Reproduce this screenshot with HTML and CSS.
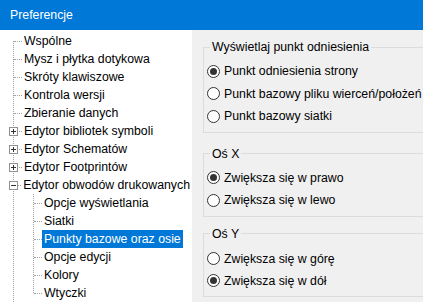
FILE: index.html
```html
<!DOCTYPE html>
<html lang="pl">
<head>
  <meta charset="UTF-8" />
  <title>Preferencje</title>
  <link rel="stylesheet" href="styles.css">
</head>
<body>

<div class="titlebar">Preferencje</div>

<div class="main">
  <!-- left: settings tree -->
  <div class="tree">
    <div class="level0">
      <div class="row"><span class="hline"></span><span class="label">Wspólne</span></div>
      <div class="row"><span class="hline"></span><span class="label">Mysz i płytka dotykowa</span></div>
      <div class="row"><span class="hline"></span><span class="label">Skróty klawiszowe</span></div>
      <div class="row"><span class="hline"></span><span class="label">Kontrola wersji</span></div>
      <div class="row"><span class="hline"></span><span class="label">Zbieranie danych</span></div>
      <div class="row">
        <svg class="expander" width="9" height="9" viewBox="0 0 9 9"><rect x="0.5" y="0.5" width="8" height="8" fill="#fff" stroke="#919191"/><path d="M2 4.5h5M4.5 2v5" stroke="#333"/></svg>
        <span class="hline"></span><span class="label">Edytor bibliotek symboli</span>
      </div>
      <div class="row">
        <svg class="expander" width="9" height="9" viewBox="0 0 9 9"><rect x="0.5" y="0.5" width="8" height="8" fill="#fff" stroke="#919191"/><path d="M2 4.5h5M4.5 2v5" stroke="#333"/></svg>
        <span class="hline"></span><span class="label">Edytor Schematów</span>
      </div>
      <div class="row">
        <svg class="expander" width="9" height="9" viewBox="0 0 9 9"><rect x="0.5" y="0.5" width="8" height="8" fill="#fff" stroke="#919191"/><path d="M2 4.5h5M4.5 2v5" stroke="#333"/></svg>
        <span class="hline"></span><span class="label">Edytor Footprintów</span>
      </div>
      <div class="row">
        <svg class="expander" width="9" height="9" viewBox="0 0 9 9"><rect x="0.5" y="0.5" width="8" height="8" fill="#fff" stroke="#919191"/><path d="M2 4.5h5" stroke="#333"/></svg>
        <span class="hline"></span><span class="label">Edytor obwodów drukowanych</span>
      </div>
      <div class="level1">
        <div class="row"><span class="hline"></span><span class="label">Opcje wyświetlania</span></div>
        <div class="row"><span class="hline"></span><span class="label">Siatki</span></div>
        <div class="row"><span class="hline"></span><span class="label selected">Punkty bazowe oraz osie</span></div>
        <div class="row"><span class="hline"></span><span class="label">Opcje edycji</span></div>
        <div class="row"><span class="hline"></span><span class="label">Kolory</span></div>
        <div class="row"><span class="hline"></span><span class="label">Wtyczki</span></div>
      </div>
    </div>
  </div>

  <!-- right: options panel -->
  <div class="panel">
    <fieldset class="group">
      <legend>Wyświetlaj punkt odniesienia</legend>
      <label class="option"><input type="radio" name="origin" checked> Punkt odniesienia strony</label>
      <label class="option"><input type="radio" name="origin"> Punkt bazowy pliku wierceń/położeń</label>
      <label class="option"><input type="radio" name="origin"> Punkt bazowy siatki</label>
    </fieldset>

    <fieldset class="group axis-x">
      <legend>Oś X</legend>
      <label class="option"><input type="radio" name="axisx" checked> Zwiększa się w prawo</label>
      <label class="option"><input type="radio" name="axisx"> Zwiększa się w lewo</label>
    </fieldset>

    <fieldset class="group axis-y">
      <legend>Oś Y</legend>
      <label class="option"><input type="radio" name="axisy"> Zwiększa się w górę</label>
      <label class="option"><input type="radio" name="axisy" checked> Zwiększa się w dół</label>
    </fieldset>
  </div>
</div>

</body>
</html>
```

FILE: styles.css
```css
body {
  margin: 0;
  width: 423px;
  height: 302px;
  overflow: hidden;
  font-family: 'Liberation Sans', Arial, sans-serif;
  font-size: 12.3px;
  color: #000;
  background: #f0f0f0;
}

.titlebar {
  height: 30px;
  line-height: 31px;
  padding-left: 10px;
  background: #0078d7;
  color: #fff;
}

.main {
  display: flex;
  height: 272px;
}

/* tree */
.tree {
  width: 192px;
  flex-shrink: 0;
  background: #fff;
  padding-top: 2px;
}

.level0,
.level1 {
  position: relative;
}

.level0::before {
  content: '';
  position: absolute;
  left: 13px;
  top: 9px;
  bottom: -40px;
  border-left: 1px dotted #a0a0a0;
}

.level1::before {
  content: '';
  position: absolute;
  left: 33px;
  top: 0;
  bottom: 9px;
  border-left: 1px dotted #a0a0a0;
}

.row {
  position: relative;
  display: flex;
  align-items: center;
  height: 18px;
  padding-left: 14px;
}

.level1 .row {
  padding-left: 34px;
}

.hline {
  width: 8px;
  border-top: 1px dotted #a0a0a0;
}

.label {
  padding: 0 2px;
  line-height: 18px;
  white-space: nowrap;
}

.label.selected {
  background: #0078d7;
  color: #fff;
}

.expander {
  position: absolute;
  left: 9px;
  top: 5px;
  z-index: 1;
}

/* option panel */
.panel {
  flex: 1;
  overflow: hidden;
  padding: 9px 0 0 11px;
}

.group {
  margin: 0 -30px 0 0;
  padding: 5px 0 4px 3px;
  border: 1px solid #dcdcdc;
}

.group.axis-x {
  margin-top: 13px;
}

.group.axis-y {
  margin-top: 9px;
  padding-top: 6px;
}

.group.axis-y .option {
  height: 22px;
}

.group legend {
  margin-left: 3px;
  padding: 0 2px;
  line-height: 16px;
}

.option {
  display: flex;
  align-items: center;
  height: 22.5px;
  white-space: nowrap;
}

.option input {
  appearance: none;
  width: 13px;
  height: 13px;
  margin: 0 4px 0 0;
  border: 1px solid #333;
  border-radius: 50%;
  background: #fff;
  display: grid;
  place-items: center;
}

.option input:checked::after {
  content: '';
  width: 7px;
  height: 7px;
  border-radius: 50%;
  background: #333;
}
```
